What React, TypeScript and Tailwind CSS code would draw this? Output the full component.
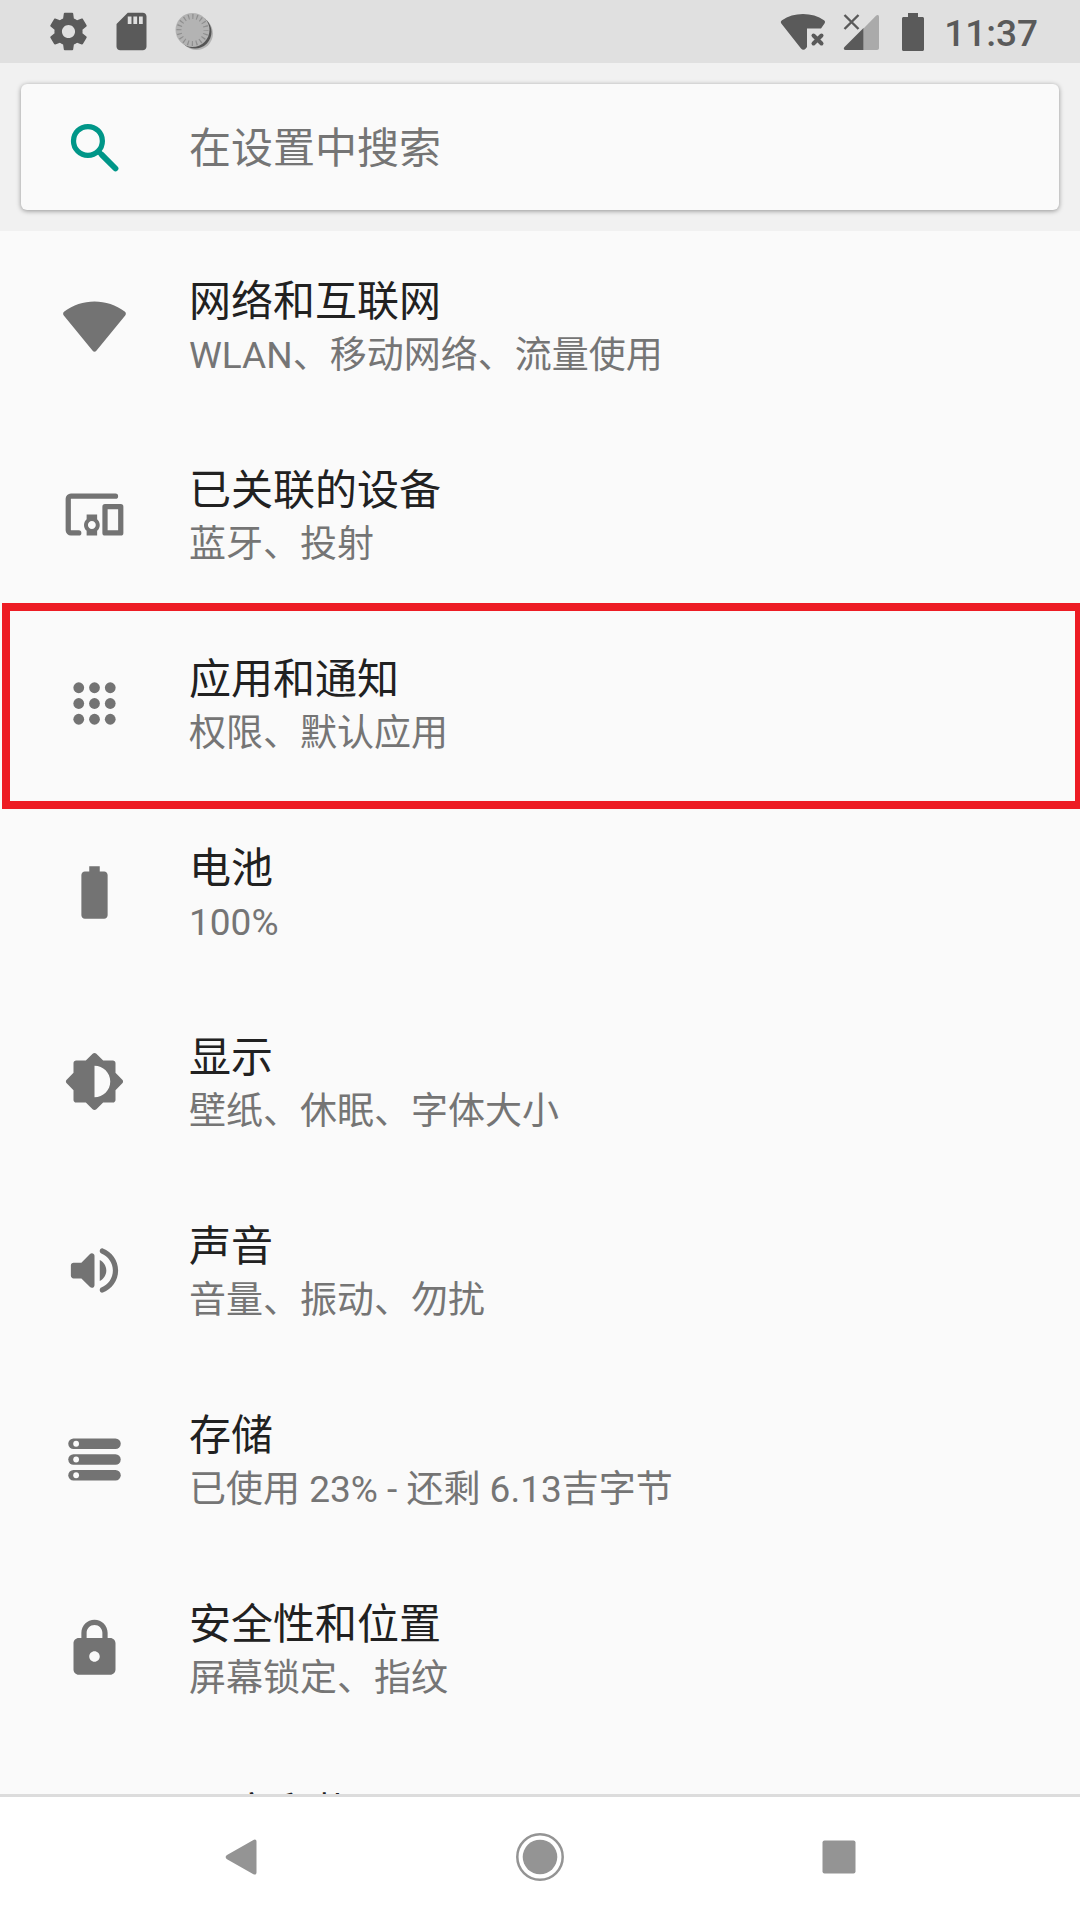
import type { ReactNode } from "react";

type Entry = {
  title: string;
  summary?: string;
  icon: ReactNode;
  highlighted?: boolean;
};

const entries: Entry[] = [
  {
    title: "网络和互联网",
    summary: "WLAN、移动网络、流量使用",
    icon: (
      <path d="M11.3 21.6.3 8.2C-.1 7.7 0 7 .5 6.7 3.8 4.2 7.8 2.9 12 2.9s8.2 1.3 11.5 3.8c.5.3.6 1 .2 1.5l-11 13.4c-.4.5-1 .5-1.4 0z" />
    ),
  },
  {
    title: "已关联的设备",
    summary: "蓝牙、投射",
    icon: (
      <>
        <g fill="none" stroke="currentColor" strokeWidth="2" strokeLinecap="round" strokeLinejoin="round">
          <path d="M20 5H3c-.5 0-1 .5-1 1v12c0 .5.5 1 1 1h3" />
          <path d="M16 9h6v10h-6z" />
        </g>
        <path d="M13 12H9v1.78c-.61.55-1 1.33-1 2.22s.39 1.67 1 2.22V20h4v-1.78c.61-.55 1-1.34 1-2.22s-.39-1.67-1-2.22V12zm-2 5.5c-.83 0-1.5-.67-1.5-1.5s.67-1.5 1.5-1.5 1.5.67 1.5 1.5-.67 1.5-1.5 1.5z" />
      </>
    ),
  },
  {
    title: "应用和通知",
    summary: "权限、默认应用",
    highlighted: true,
    icon: (
      <>
        {[6, 12, 18].map((cy) =>
          [6, 12, 18].map((cx) => <circle key={`${cx}-${cy}`} cx={cx} cy={cy} r="2.05" />)
        )}
      </>
    ),
  },
  {
    title: "电池",
    summary: "100%",
    icon: (
      <path d="M15.67 4H14V2h-4v2H8.33C7.6 4 7 4.6 7 5.33v15.33C7 21.4 7.6 22 8.33 22h7.33c.74 0 1.34-.6 1.34-1.33V5.33C17 4.6 16.4 4 15.67 4z" />
    ),
  },
  {
    title: "显示",
    summary: "壁纸、休眠、字体大小",
    icon: (
      <path d="M20 8.69V5c0-.55-.45-1-1-1h-3.69l-2.6-2.6c-.39-.39-1.02-.39-1.41 0L8.69 4H5c-.55 0-1 .45-1 1v3.69l-2.6 2.6c-.39.39-.39 1.02 0 1.41L4 15.3V19c0 .55.45 1 1 1h3.69l2.6 2.6c.39.39 1.02.39 1.41 0l2.6-2.6H19c.55 0 1-.45 1-1v-3.69l2.6-2.6c.39-.39.39-1.02 0-1.41L20 8.69zM12 18V6c3.31 0 6 2.69 6 6s-2.69 6-6 6z" />
    ),
  },
  {
    title: "声音",
    summary: "音量、振动、勿扰",
    icon: (
      <path d="M3 10v4c0 .55.45 1 1 1h3l3.29 3.29c.63.63 1.71.18 1.71-.71V6.41c0-.89-1.08-1.34-1.71-.71L7 9H4c-.55 0-1 .45-1 1zm13.5 2c0-1.77-1.02-3.29-2.5-4.03v8.05c1.48-.73 2.5-2.25 2.5-4.02zM14 4.45v.2c0 .38.25.71.6.85C17.18 6.53 19 9.06 19 12s-1.82 5.47-4.4 6.5c-.36.14-.6.47-.6.85v.2c0 .63.63 1.07 1.21.85C18.6 19.11 21 15.84 21 12s-2.4-7.11-5.79-8.4c-.58-.23-1.21.22-1.21.85z" />
    ),
  },
  {
    title: "存储",
    summary: "已使用 23% - 还剩 6.13吉字节",
    icon: (
      <>
        {[4, 10, 16].map((y) => (
          <g key={y}>
            <rect x="2" y={y} width="20" height="4" rx="2" />
            <circle cx="5" cy={y + 2} r="1.1" fill="#fafafa" />
          </g>
        ))}
      </>
    ),
  },
  {
    title: "安全性和位置",
    summary: "屏幕锁定、指纹",
    icon: (
      <path d="M18 8h-1V6c0-2.76-2.24-5-5-5S7 3.24 7 6v2H6c-1.1 0-2 .9-2 2v10c0 1.1.9 2 2 2h12c1.1 0 2-.9 2-2V10c0-1.1-.9-2-2-2zm-6 9c-1.1 0-2-.9-2-2s.9-2 2-2 2 .9 2 2-.9 2-2 2zM9 8V6c0-1.66 1.34-3 3-3s3 1.34 3 3v2H9z" />
    ),
  },
  { title: "用户和帐号", icon: null },
];

function StatusBar() {
  return (
    <header className="flex h-[63px] shrink-0 items-center justify-between bg-[#e0e0e0] pl-[46px] pr-[42px] text-[#5a5a5a]">
      <div className="flex items-center gap-[18px]">
        <svg viewBox="0 0 24 24" className="size-[45px]" fill="currentColor" aria-hidden="true">
          <path d="M19.43 12.98c.04-.32.07-.64.07-.98s-.03-.66-.07-.98l2.11-1.65c.19-.15.24-.42.12-.64l-2-3.46c-.12-.22-.39-.3-.61-.22l-2.49 1c-.52-.4-1.08-.73-1.69-.98l-.38-2.65C14.46 2.18 14.25 2 14 2h-4c-.25 0-.46.18-.49.42l-.38 2.65c-.61.25-1.17.59-1.69.98l-2.49-1c-.23-.09-.49 0-.61.22l-2 3.46c-.13.22-.07.49.12.64l2.11 1.65c-.04.32-.07.65-.07.98s.03.66.07.98l-2.11 1.65c-.19.15-.24.42-.12.64l2 3.46c.12.22.39.3.61.22l2.49-1c.52.4 1.08.73 1.69.98l.38 2.65c.03.24.24.42.49.42h4c.25 0 .46-.18.49-.42l.38-2.65c.61-.25 1.17-.59 1.69-.98l2.49 1c.23.09.49 0 .61-.22l2-3.46c.12-.22.07-.49-.12-.64l-2.11-1.65zM12 15.5c-1.93 0-3.5-1.57-3.5-3.5s1.57-3.5 3.5-3.5 3.5 1.57 3.5 3.5-1.57 3.5-3.5 3.5z" />
        </svg>
        <svg viewBox="0 0 24 24" className="size-[45px]" fill="currentColor" aria-hidden="true">
          <path d="M18 2h-8L4.02 8 4 20c0 1.1.9 2 2 2h12c1.1 0 2-.9 2-2V4c0-1.1-.9-2-2-2zm-6 6h-2V4h2v4zm3 0h-2V4h2v4zm3 0h-2V4h2v4z" />
        </svg>
        <svg viewBox="0 0 45 45" className="size-[45px]" aria-hidden="true">
          <circle cx="24.5" cy="24.5" r="16.5" fill="#b4b4b4" />
          <circle cx="23" cy="23" r="16.5" fill="#555" />
          <circle cx="20.5" cy="21" r="17" fill="#b3b3b3" />
          <circle
            cx="20.5"
            cy="21"
            r="13.5"
            fill="none"
            stroke="#8f8f8f"
            strokeWidth="5"
            strokeDasharray="1.2 3.041"
            strokeDashoffset="0.6"
          />
        </svg>
      </div>
      <div className="flex items-center">
        <svg viewBox="0 0 46 38" className="mr-[17px] h-[38px] w-[46px]" fill="currentColor" aria-hidden="true">
          <path d="M23 1c8 0 15 2.200 21 6.200 1.200 .8 1.400 2 .5 3.200L41 15.500H27V34l-1.200 1.600c-1.400 1.600-3.400 1.600-4.800 0L1.300 10.400C.5 9.200 .7 8 2 7.200 8 3.200 15 1 23 1z" />
          <path d="m33.500 22.500 8 8m0-8-8 8" stroke="currentColor" strokeWidth="4" strokeLinecap="round" />
        </svg>
        <svg viewBox="0 0 36 38" className="mr-[23px] h-[38px] w-[36px]" aria-hidden="true">
          <path d="M20.500 15.500 33 2.800c1.300-1.300 3-.8 3 1.200v31c0 1.200-.8 2-2 2H20.500z" fill="#aaa" />
          <path d="M20.500 15v22H2.500C.8 37 .2 35.300 1.500 34z" fill="currentColor" />
          <path d="m1.500 2 14 14m0-14-14 14" stroke="currentColor" strokeWidth="2.400" fill="none" />
        </svg>
        <svg viewBox="0 0 22 38" className="mr-5 h-[38px] w-[22px]" fill="currentColor" aria-hidden="true">
          <path d="M6 0h10v4h4.500c.8 0 1.500 .7 1.500 1.500v31c0 .8-.7 1.500-1.500 1.500h-19C.7 38 0 37.300 0 36.500v-31C0 4.700 .7 4 1.500 4H6z" />
        </svg>
        <time className="pt-[3px] text-[37px] leading-[43px] font-medium">11:37</time>
      </div>
    </header>
  );
}

function SearchBox() {
  return (
    <div className="shrink-0 bg-[#f1f1f1] p-[21px]">
      <label className="flex h-[126px] items-center rounded-[6px] bg-[#fafafa] pl-[42px] shadow-[0_1px_5px_rgba(0,0,0,0.4)]">
        <svg viewBox="0 0 24 24" className="mr-[63px] size-[63px] shrink-0 text-[#009688]" fill="none" stroke="currentColor" strokeWidth="2" aria-hidden="true">
          <circle cx="9.500" cy="9.500" r="5.500" />
          <path d="M14.900 14.900 20 20" strokeWidth="2.200" strokeLinecap="round" />
          <path d="M13.600 13.600 15 15" />
        </svg>
        <input
          type="search"
          aria-label="在设置中搜索"
          placeholder="在设置中搜索"
          className="min-w-0 flex-1 bg-transparent pt-[3px] text-[42px] leading-[56px] outline-none placeholder:text-[#757575]"
        />
      </label>
    </div>
  );
}

function SettingsRow({ title, summary, icon, highlighted }: Entry) {
  return (
    <li className="relative">
      <button type="button" className="flex min-h-[189px] w-full items-center pl-[63px] text-left">
        <svg viewBox="0 0 24 24" className="mr-[63px] size-[63px] shrink-0 overflow-visible text-[#737373]" fill="currentColor" aria-hidden="true">
          {icon}
        </svg>
        <span className="flex min-h-[112px] flex-col pt-1">
          <span className="text-[42px] leading-[56px] text-[#212121]">{title}</span>
          {summary && <span className="text-[37px] leading-[52px] text-[#757575]">{summary}</span>}
        </span>
      </button>
      {highlighted && (
        <div className="pointer-events-none absolute -top-[6px] -right-[3px] -bottom-[11px] left-[2px] border-8 border-[#ed1c24]" />
      )}
    </li>
  );
}

function NavigationBar() {
  return (
    <nav className="grid h-[126px] shrink-0 grid-cols-3 border-t-[3px] border-[#dcdcdc] bg-white px-[92px] pb-[3px] text-[#949494]">
      <button type="button" aria-label="返回" className="flex items-center justify-center">
        <svg viewBox="0 0 48 48" className="size-[48px]" fill="currentColor" aria-hidden="true">
          <path d="M10 22 36 7.200c2-1.200 3.500-.6 3.500 1.400v31c0 2-1.500 2.600-3.500 1.400L10 26.200c-1.800-1.100-1.800-3.100 0-4.200z" />
        </svg>
      </button>
      <button type="button" aria-label="主屏幕" className="flex items-center justify-center">
        <svg viewBox="0 0 48 48" className="size-[48px]" fill="currentColor" aria-hidden="true">
          <circle cx="24" cy="24" r="22.700" fill="none" stroke="currentColor" strokeWidth="2.500" />
          <circle cx="24" cy="24" r="17.300" />
        </svg>
      </button>
      <button type="button" aria-label="最近" className="flex items-center justify-center">
        <svg viewBox="0 0 48 48" className="size-[48px]" fill="currentColor" aria-hidden="true">
          <rect x="7.500" y="7.500" width="33" height="33" rx="2" />
        </svg>
      </button>
    </nav>
  );
}

export default function App() {
  return (
    <div className="flex h-screen flex-col overflow-hidden bg-[#fafafa] font-['Roboto','Noto_Sans_CJK_SC',sans-serif]" lang="zh-CN">
      <StatusBar />
      <SearchBox />
      <main className="min-h-0 flex-1 overflow-hidden">
        <ul>
          {entries.map((entry) => (
            <SettingsRow key={entry.title} {...entry} />
          ))}
        </ul>
      </main>
      <NavigationBar />
    </div>
  );
}
